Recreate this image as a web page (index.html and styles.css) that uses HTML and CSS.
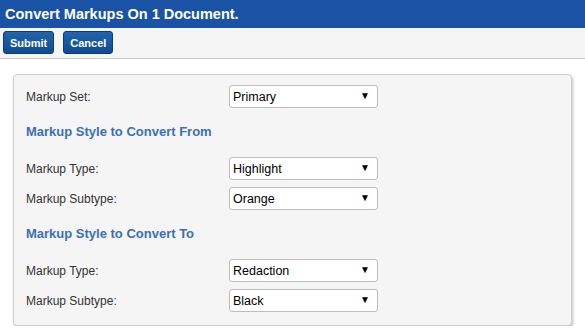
FILE: index.html
```html
<!DOCTYPE html>
<html lang="en">
<head>
    <meta charset="UTF-8">
    <title>Convert Markups</title>
    <link rel="stylesheet" href="styles.css">
</head>
<body>
    <header class="title-bar">
        <h1>Convert Markups On 1 Document.</h1>
    </header>

    <div class="toolbar">
        <button type="button" class="btn">Submit</button>
        <button type="button" class="btn">Cancel</button>
    </div>

    <div class="panel">
        <div class="row">
            <label for="markupSet">Markup Set:</label>
            <span class="select-wrap">
                <select id="markupSet"><option>Primary</option></select>
            </span>
        </div>

        <h3>Markup Style to Convert From</h3>
        <div class="row">
            <label for="fromType">Markup Type:</label>
            <span class="select-wrap">
                <select id="fromType"><option>Highlight</option></select>
            </span>
        </div>
        <div class="row">
            <label for="fromSubtype">Markup Subtype:</label>
            <span class="select-wrap">
                <select id="fromSubtype"><option>Orange</option></select>
            </span>
        </div>

        <h3>Markup Style to Convert To</h3>
        <div class="row">
            <label for="toType">Markup Type:</label>
            <span class="select-wrap">
                <select id="toType"><option>Redaction</option></select>
            </span>
        </div>
        <div class="row">
            <label for="toSubtype">Markup Subtype:</label>
            <span class="select-wrap">
                <select id="toSubtype"><option>Black</option></select>
            </span>
        </div>
    </div>
</body>
</html>
```

FILE: styles.css
```css
body {
    margin: 0;
    font-family: "Liberation Sans", Arial, sans-serif;
    background-color: #fff;
    color: #333;
}

.title-bar {
    background-color: #1a52a6;
    height: 28px;
    padding: 0 5px;
    display: flex;
    align-items: center;
}

.title-bar h1 {
    margin: 0;
    color: #fff;
    font-size: 14.5px;
    font-weight: bold;
}

.toolbar {
    background-color: #f5f5f5;
    border-bottom: 1px solid #c8c8c8;
    padding: 3px 3px 4px;
    display: flex;
    gap: 9px;
}

.btn {
    height: 23px;
    padding: 0 6px;
    font-family: "Liberation Sans", Arial, sans-serif;
    font-size: 11px;
    font-weight: bold;
    color: #fff;
    background: linear-gradient(#2364ad, #0f4b91);
    border: 1px solid #0c3d78;
    border-radius: 3px;
    cursor: pointer;
}

.panel {
    margin: 15px 13px 0;
    padding: 10px 12px 13px;
    background-color: #f5f5f5;
    border: 1px solid #cfcfcf;
    border-radius: 4px;
    box-shadow: 1px 2px 3px rgba(0, 0, 0, 0.25);
}

.row {
    display: flex;
    align-items: center;
    height: 23px;
    margin-bottom: 7px;
}

.row:last-child {
    margin-bottom: 0;
}

.row label {
    width: 203px;
    font-size: 12px;
    color: #333;
}

.panel h3 {
    margin: 15px 0 16px;
    line-height: 18px;
    font-size: 13px;
    font-weight: bold;
    color: #3b70b5;
}

.select-wrap {
    position: relative;
    display: block;
}

.select-wrap select {
    appearance: none;
    width: 149px;
    height: 23px;
    padding: 0 3px;
    font-family: "Liberation Sans", Arial, sans-serif;
    font-size: 12.5px;
    color: #000;
    background-color: #fff;
    border: 1px solid #bdbdbd;
    border-radius: 3px;
}

.select-wrap::after {
    content: "\25BC";
    position: absolute;
    right: 8px;
    top: 5px;
    font-size: 10px;
    color: #000;
    pointer-events: none;
}
```
